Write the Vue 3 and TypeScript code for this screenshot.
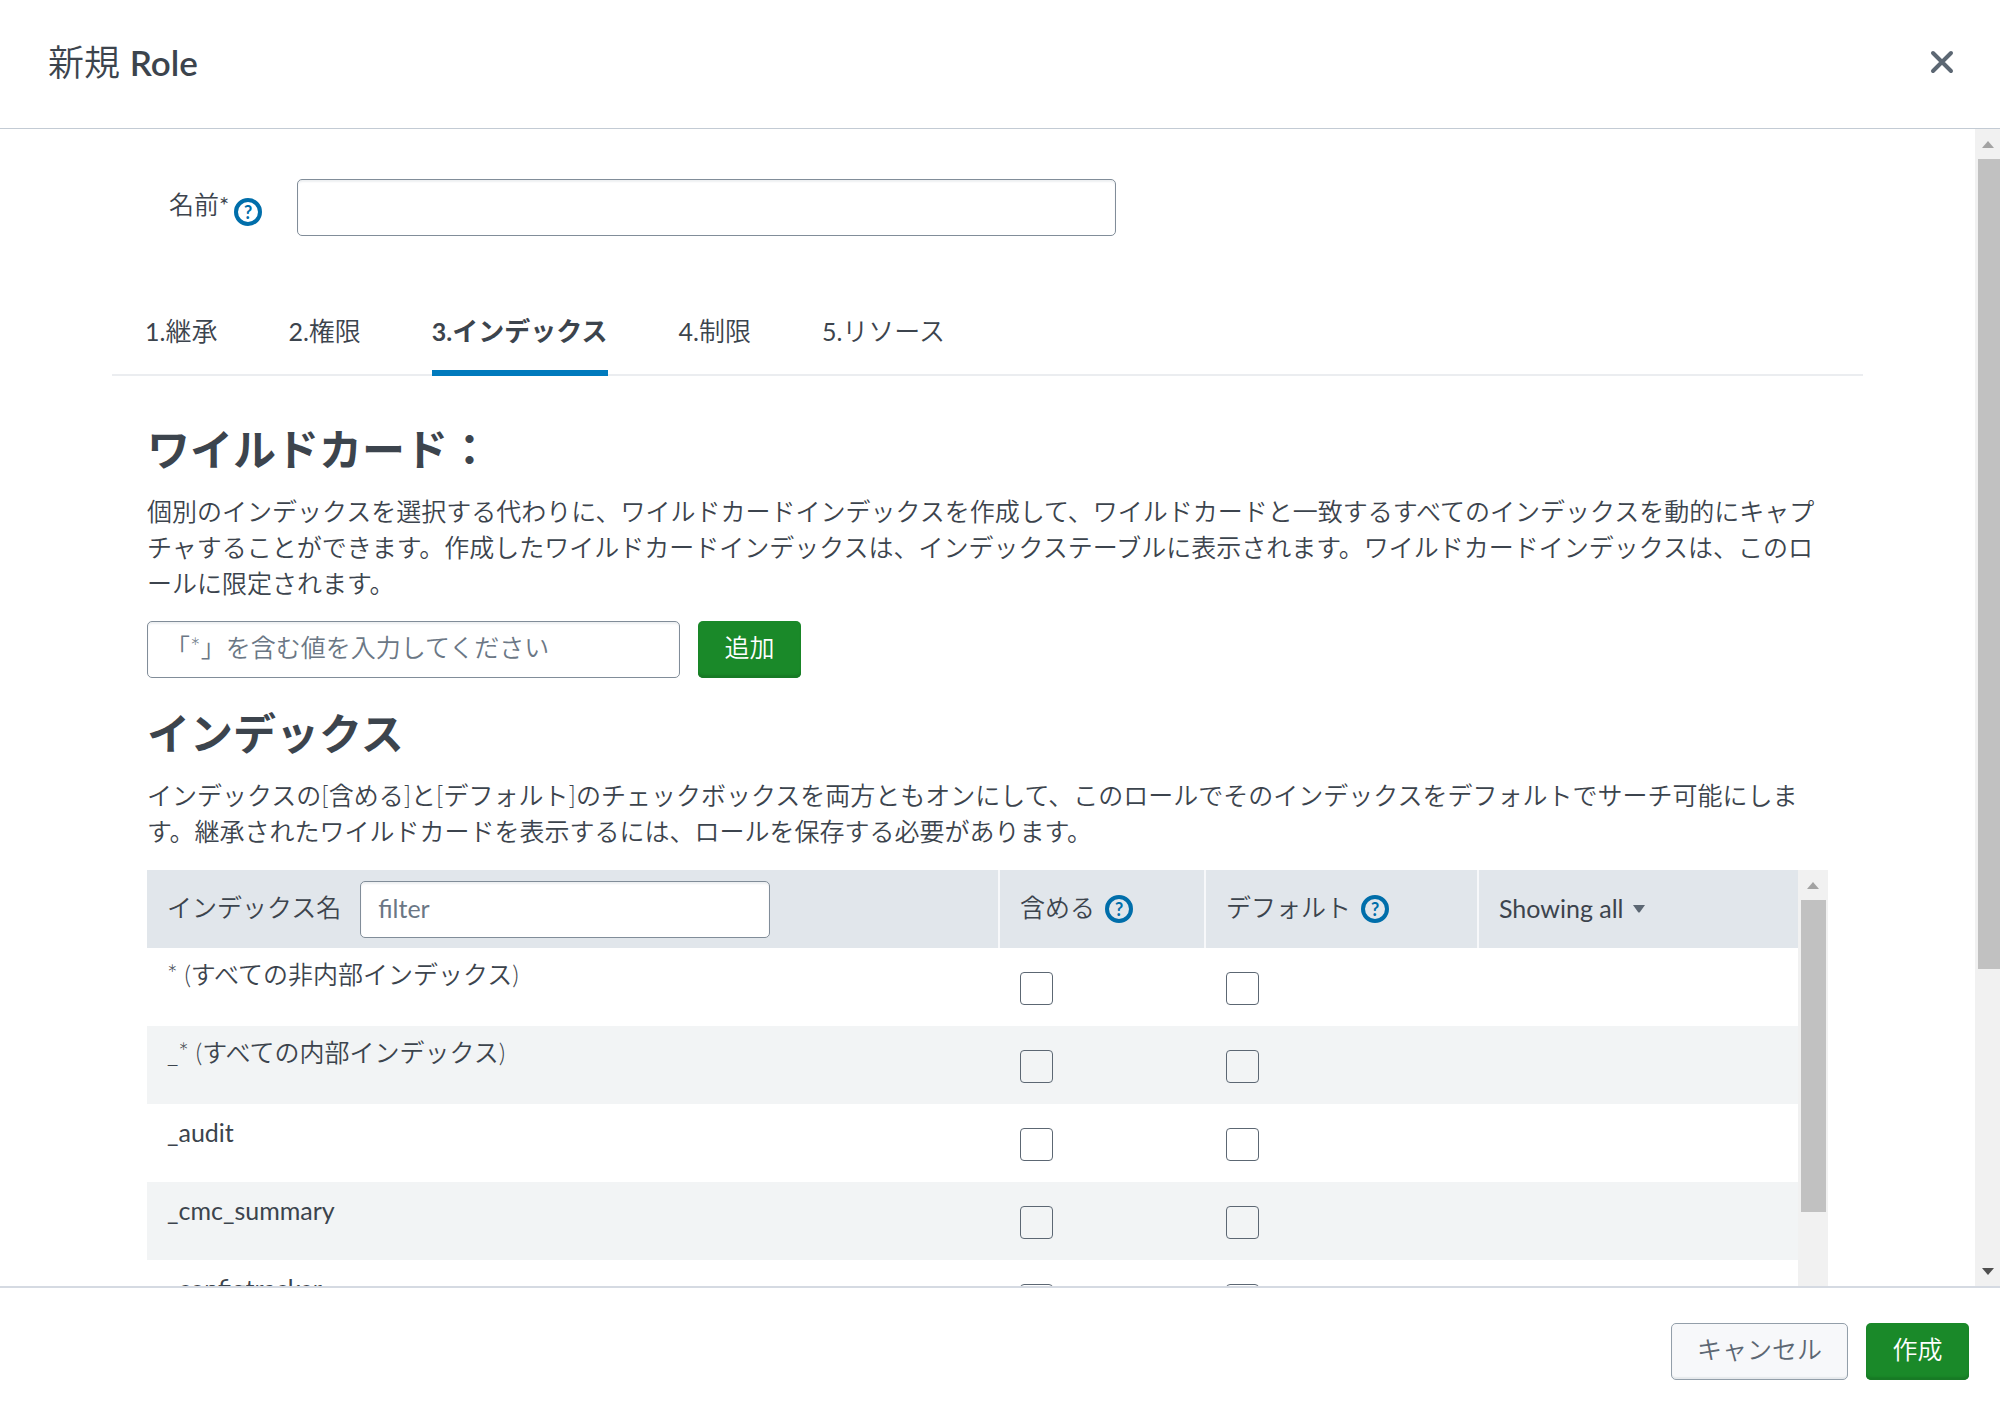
<script setup lang="ts">
import { ref } from 'vue'

interface Tab {
  step: string
  label: string
}

interface IndexRow {
  name: string
  included: boolean
  isDefault: boolean
}

const roleName = ref('')
const wildcard = ref('')
const filter = ref('')
const showing = ref('all')
const activeTab = ref(2)

const tabs: Tab[] = [
  { step: '1.', label: '継承' },
  { step: '2.', label: '権限' },
  { step: '3.', label: 'インデックス' },
  { step: '4.', label: '制限' },
  { step: '5.', label: 'リソース' },
]

const rows = ref<IndexRow[]>(
  ['* (すべての非内部インデックス)', '_* (すべての内部インデックス)', '_audit', '_cmc_summary', '_configtracker'].map(
    (name) => ({ name, included: false, isDefault: false }),
  ),
)

const isAscii = (text: string): boolean => /^[\x20-\x7e]+$/.test(text)
</script>

<template>
  <div class="dialog" role="dialog" aria-labelledby="dialog-title" lang="ja">
    <header class="dialog-header">
      <h1 id="dialog-title">新規 <span class="entity">Role</span></h1>
      <button class="close" type="button" aria-label="閉じる">
        <svg viewBox="0 0 24 24" width="24" height="24">
          <path d="M3 3 21 21M21 3 3 21" fill="none" stroke="#5c6773" stroke-width="4" stroke-linecap="round" />
        </svg>
      </button>
    </header>

    <div class="dialog-body">
      <main class="content">
        <div class="name-row">
          <div class="name-label">
            <label for="role-name">名前<sup>*</sup></label>
            <button class="help" type="button" aria-label="名前のヘルプ">?</button>
          </div>
          <input id="role-name" v-model="roleName" class="field name-field" type="text" />
        </div>

        <div class="tabs" role="tablist">
          <button
            v-for="(tab, i) in tabs"
            :key="tab.step"
            class="tab"
            :class="{ active: i === activeTab }"
            type="button"
            role="tab"
            :aria-selected="i === activeTab"
            @click="activeTab = i"
          ><span class="step">{{ tab.step }}</span>{{ tab.label }}</button>
        </div>

        <section class="panel">
          <h2>ワイルドカード：</h2>
          <p>個別のインデックスを選択する代わりに、ワイルドカードインデックスを作成して、ワイルドカードと一致するすべてのインデックスを動的にキャプチャすることができます。作成したワイルドカードインデックスは、インデックステーブルに表示されます。ワイルドカードインデックスは、このロールに限定されます。</p>
          <div class="wildcard-row">
            <input v-model="wildcard" class="field wildcard-field" type="text" aria-label="ワイルドカード" placeholder="「*」を含む値を入力してください" />
            <button class="btn primary" type="button">追加</button>
          </div>

          <h2 class="second">インデックス</h2>
          <p>インデックスの[含める]と[デフォルト]のチェックボックスを両方ともオンにして、このロールでそのインデックスをデフォルトでサーチ可能にします。継承されたワイルドカードを表示するには、ロールを保存する必要があります。</p>

          <div class="table-area">
            <table>
              <colgroup>
                <col />
                <col class="col-include" />
                <col class="col-default" />
                <col class="col-showing" />
              </colgroup>
              <thead>
                <tr>
                  <th scope="col">
                    <div class="head-cell wide-gap">
                      <label class="head-text" for="index-filter">インデックス名</label>
                      <input id="index-filter" v-model="filter" class="field filter-field" type="text" placeholder="filter" />
                    </div>
                  </th>
                  <th scope="col">
                    <div class="head-cell">
                      <span class="head-text">含める</span>
                      <button class="help" type="button" aria-label="含めるのヘルプ">?</button>
                    </div>
                  </th>
                  <th scope="col">
                    <div class="head-cell">
                      <span class="head-text">デフォルト</span>
                      <button class="help" type="button" aria-label="デフォルトのヘルプ">?</button>
                    </div>
                  </th>
                  <th scope="col">
                    <div class="head-cell small-gap">
                      <select v-model="showing" class="showing" aria-label="表示">
                        <option value="all">Showing all</option>
                      </select>
                      <svg class="caret" viewBox="0 0 14 8" width="14" height="8"><path d="M1 0H13L8 7Q7 8 6 7Z" fill="#5c6773" /></svg>
                    </div>
                  </th>
                </tr>
              </thead>
              <tbody>
                <tr v-for="row in rows" :key="row.name">
                  <td :class="{ latin: isAscii(row.name) }">{{ row.name }}</td>
                  <td class="check"><input v-model="row.included" type="checkbox" :aria-label="row.name + ' 含める'" /></td>
                  <td class="check"><input v-model="row.isDefault" type="checkbox" :aria-label="row.name + ' デフォルト'" /></td>
                  <td></td>
                </tr>
              </tbody>
            </table>
            <div class="scrollbar inner" aria-hidden="true">
              <span class="arrow up"></span>
              <span class="thumb"></span>
            </div>
          </div>
        </section>
      </main>
      <div class="scrollbar outer" aria-hidden="true">
        <span class="arrow up"></span>
        <span class="thumb"></span>
        <span class="arrow down"></span>
      </div>
    </div>

    <footer class="dialog-footer">
      <button class="btn secondary" type="button">キャンセル</button>
      <button class="btn primary" type="button">作成</button>
    </footer>
  </div>
</template>

<style>
body {
  margin: 0;
  background: #fff;
}
</style>

<style scoped>
* {
  box-sizing: border-box;
}

.dialog {
  display: flex;
  flex-direction: column;
  height: 100vh;
  overflow: hidden;
  background: #fff;
  color: #3c444d;
  font: 350 25px/36px Lato, "Noto Sans CJK JP", sans-serif;
}

button,
input,
select {
  margin: 0;
  font: inherit;
  color: inherit;
}

button {
  padding: 0;
  border: 0;
  background: none;
  cursor: pointer;
}

.dialog-header {
  display: flex;
  flex: none;
  align-items: center;
  justify-content: space-between;
  height: 129px;
  padding: 0 46px 4px 48px;
  border-bottom: 1px solid #c3cbd4;
}

h1 {
  margin: 0;
  font-size: 36px;
  line-height: 48px;
  font-weight: 350;
}

.entity {
  font-size: 35px;
  font-weight: 600;
}

.close {
  display: flex;
}

.dialog-body {
  display: flex;
  flex: 1;
  min-height: 0;
  overflow: hidden;
}

.content {
  flex: 1;
  min-width: 0;
  padding: 50px 112px 0;
}

.field {
  height: 57px;
  padding: 0 17px 6px;
  border: 1px solid #818d99;
  border-radius: 5px;
  outline: 0;
  background: #fff;
  box-shadow: inset 0 2px 2px #eef0f2;
}

.field::placeholder {
  color: #6b7785;
  opacity: 1;
}

.name-row {
  display: flex;
  padding-left: 57px;
}

.name-label {
  display: flex;
  gap: 5px;
  width: 128px;
  padding-top: 7px;
}

.name-label .help {
  margin-top: 12px;
}

sup {
  font-size: 24px;
  line-height: 24px;
  font-weight: 400;
  vertical-align: baseline;
}

.name-field {
  flex: 0 1 819px;
  min-width: 0;
}

.help {
  flex: none;
  width: 28px;
  height: 28px;
  border: 4px solid #006eaa;
  border-radius: 50%;
  color: #006eaa;
  font-size: 18px;
  line-height: 20px;
  font-weight: 700;
  text-align: center;
}

.tabs {
  display: flex;
  gap: 71px;
  margin-top: 77px;
  padding: 0 33px;
  box-shadow: inset 0 -2px #ebedf0;
}

.tab {
  padding-bottom: 21px;
  border-bottom: 6px solid transparent;
  font-size: 26px;
  white-space: nowrap;
}

.step {
  font-size: 25px;
  font-weight: 400;
}

.tab.active,
.active .step {
  font-weight: 700;
}

.tab.active {
  border-bottom-color: #007abd;
}

.panel {
  padding: 0 35px;
}

h2 {
  margin: 49px 0 18px;
  font-size: 43px;
  line-height: 50px;
  font-weight: 700;
}

h2.second {
  margin-top: 31px;
}

p {
  margin: 0 0 20px;
  line-break: loose;
}

.wildcard-row {
  display: flex;
  gap: 18px;
}

.wildcard-field {
  flex: 0 1 533px;
  min-width: 0;
}

.btn {
  min-width: 103px;
  height: 57px;
  padding: 0 25px 6px;
  border-radius: 5px;
  white-space: nowrap;
}

.primary {
  background: #1a8929;
  box-shadow: inset 0 -3px 2px #187a25;
  color: #fff;
}

.secondary {
  border: 1px solid #939faa;
  background: #f7f8fa;
  box-shadow: inset 0 -2px 1px #e6e9ec;
  color: #5c6773;
}

.table-area {
  display: flex;
  padding-top: 1px;
}

table {
  flex: 1;
  min-width: 0;
  border-collapse: collapse;
  table-layout: fixed;
}

.col-include {
  width: 206px;
}

.col-default {
  width: 273px;
}

.col-showing {
  width: 320px;
}

th {
  height: 78px;
  padding: 0 20px;
  background: #e1e6eb;
  font-weight: 350;
  text-align: left;
}

th + th {
  border-left: 2px solid #f7f8fa;
}

.head-cell {
  display: flex;
  align-items: center;
  gap: 10px;
  white-space: nowrap;
}

.head-text {
  padding-bottom: 5px;
}

.wide-gap {
  gap: 19px;
}

.small-gap {
  gap: 8px;
}

.filter-field {
  flex: 0 1 410px;
  min-width: 0;
  padding-bottom: 3px;
  font-weight: 400;
}

.showing {
  padding: 0 0 2px;
  border: 0;
  outline: 0;
  background: transparent;
  font-weight: 400;
  appearance: none;
}

td {
  height: 78px;
  padding: 8px 20px;
  vertical-align: top;
}

td.latin {
  padding-top: 10px;
  font-weight: 400;
}

td.check {
  padding-top: 24px;
  padding-left: 21px;
}

tbody tr:nth-child(even) {
  background: #f2f4f5;
}

.check input {
  display: block;
  width: 33px;
  height: 33px;
  border: 1px solid #5c6773;
  border-radius: 4px;
  appearance: none;
}

.scrollbar {
  display: flex;
  flex: none;
  flex-direction: column;
  align-items: center;
  background: #f1f1f1;
}

.inner {
  width: 30px;
}

.outer {
  width: 25px;
}

.thumb {
  background: #c1c1c1;
}

.inner .thumb {
  width: 25px;
  height: 312px;
}

.outer .thumb {
  align-self: flex-end;
  width: 22px;
  height: 70%;
}

.arrow {
  display: flex;
  align-items: center;
  justify-content: center;
  height: 30px;
}

.arrow::before {
  border: 6px solid transparent;
  content: "";
}

.up::before {
  border-top: 0;
  border-bottom: 7px solid #a3a3a3;
}

.down {
  margin-top: auto;
}

.down::before {
  border-top: 7px solid #505050;
  border-bottom: 0;
}

.dialog-footer {
  display: flex;
  flex: none;
  justify-content: flex-end;
  gap: 18px;
  height: 126px;
  padding: 35px 31px 0;
  border-top: 2px solid #d5dae2;
}
</style>
